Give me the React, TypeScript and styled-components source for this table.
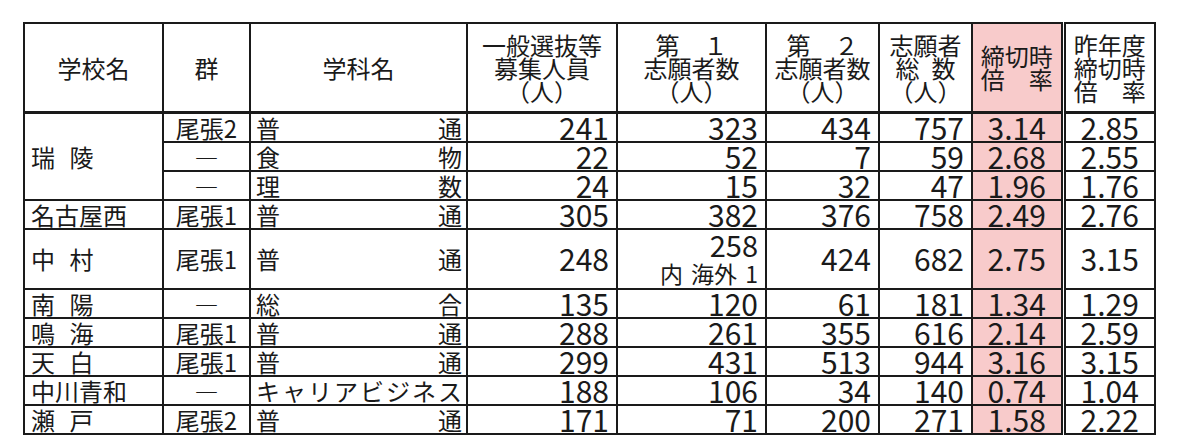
import React from "react";
import styled, { createGlobalStyle } from "styled-components";

const GlobalStyle = createGlobalStyle`
	body {
		margin: 0;
		background: #ffffff;
		color: #1a1a1a;
		font-family: "Noto Sans CJK JP", "Noto Sans", sans-serif;
	}
`;

const Page = styled.div`
	padding: 22px 0 0 23px;
`;

const Table = styled.table`
	border-collapse: collapse;
	table-layout: fixed;
	width: 1133px;
	border: 2px solid #1a1a1a;
`;

const HeadRow = styled.tr`
	height: 89px;
`;

const BodyRow = styled.tr<{ $tall?: boolean }>`
	height: ${(p) => (p.$tall ? "59px" : "29px")};
`;

const Cell = styled.td<{ $pink?: boolean; $double?: boolean }>`
	border: 2px solid #1a1a1a;
	padding: 0;
	vertical-align: middle;
	white-space: nowrap;
	background: ${(p) => (p.$pink ? "#f8cbcb" : "transparent")};
	border-left: ${(p) => (p.$double ? "5px double #1a1a1a" : "2px solid #1a1a1a")};
`;

const HeadCell = styled(Cell).attrs({ as: "th" })`
	border-bottom: 3px solid #1a1a1a;
	font-weight: normal;
	font-size: 24px;
	line-height: 23px;
	text-align: center;
`;

const Gap = styled.span<{ $w: number }>`
	display: inline-block;
	width: ${(p) => p.$w}px;
`;

const NameCell = styled(Cell)`
	font-size: 24px;
	line-height: 27px;
	padding-left: 6px;
	word-spacing: 9px;
`;

const GroupCell = styled(Cell)`
	font-size: 24px;
	line-height: 27px;
	text-align: center;
`;

const SubjectCell = styled(Cell)`
	font-size: 24px;
	line-height: 27px;
	padding: 0 4px 0 5px;
`;

const Spread = styled.div`
	display: flex;
	justify-content: space-between;
`;

const NumCell = styled(Cell)`
	font-size: 30px;
	line-height: 27px;
	text-align: right;
	padding-right: 7px;
`;

const RateCell = styled(Cell)`
	font-size: 30px;
	line-height: 27px;
	text-align: center;
`;

const StackLine = styled.div<{ $small?: boolean }>`
	font-size: ${(p) => (p.$small ? "23px" : "29px")};
	line-height: 29px;
	word-spacing: ${(p) => (p.$small ? "3px" : "0")};
`;

type Row = {
	school?: string;
	span?: number;
	group: string;
	subject: string;
	quota: number;
	first: number;
	firstNote?: string;
	second: number;
	total: number;
	rate: string;
	prev: string;
};

const rows: Row[] = [
	{ school: "瑞 陵", span: 3, group: "尾張2", subject: "普通", quota: 241, first: 323, second: 434, total: 757, rate: "3.14", prev: "2.85" },
	{ group: "―", subject: "食物", quota: 22, first: 52, second: 7, total: 59, rate: "2.68", prev: "2.55" },
	{ group: "―", subject: "理数", quota: 24, first: 15, second: 32, total: 47, rate: "1.96", prev: "1.76" },
	{ school: "名古屋西", group: "尾張1", subject: "普通", quota: 305, first: 382, second: 376, total: 758, rate: "2.49", prev: "2.76" },
	{ school: "中 村", group: "尾張1", subject: "普通", quota: 248, first: 258, firstNote: "内 海外 1", second: 424, total: 682, rate: "2.75", prev: "3.15" },
	{ school: "南 陽", group: "―", subject: "総合", quota: 135, first: 120, second: 61, total: 181, rate: "1.34", prev: "1.29" },
	{ school: "鳴 海", group: "尾張1", subject: "普通", quota: 288, first: 261, second: 355, total: 616, rate: "2.14", prev: "2.59" },
	{ school: "天 白", group: "尾張1", subject: "普通", quota: 299, first: 431, second: 513, total: 944, rate: "3.16", prev: "3.15" },
	{ school: "中川青和", group: "―", subject: "キャリアビジネス", quota: 188, first: 106, second: 34, total: 140, rate: "0.74", prev: "1.04" },
	{ school: "瀬 戸", group: "尾張2", subject: "普通", quota: 171, first: 71, second: 200, total: 271, rate: "1.58", prev: "2.22" },
];

const widths = [139, 87, 217, 150, 149, 113, 93, 91, 92];

function Subject({ text }: { text: string }) {
	return (
		<Spread>
			{Array.from(text).map((ch, i) => (
				<span key={i}>{ch}</span>
			))}
		</Spread>
	);
}

export default function App() {
	return (
		<Page>
			<GlobalStyle />
			<Table>
				<colgroup>
					{widths.map((w, i) => (
						<col key={i} style={{ width: w }} />
					))}
				</colgroup>
				<thead>
					<HeadRow>
						<HeadCell>学校名</HeadCell>
						<HeadCell>群</HeadCell>
						<HeadCell>学科名</HeadCell>
						<HeadCell>
							一般選抜等
							<br />
							募集人員
							<br />
							（人）
						</HeadCell>
						<HeadCell>
							第　１
							<br />
							志願者数
							<br />
							（人）
						</HeadCell>
						<HeadCell>
							第　２
							<br />
							志願者数
							<br />
							（人）
						</HeadCell>
						<HeadCell>
							志願者
							<br />
							総<Gap $w={12} />数
							<br />
							（人）
						</HeadCell>
						<HeadCell $pink>
							締切時
							<br />
							倍　率
						</HeadCell>
						<HeadCell $double>
							昨年度
							<br />
							締切時
							<br />
							倍　率
						</HeadCell>
					</HeadRow>
				</thead>
				<tbody>
					{rows.map((r, i) => (
						<BodyRow key={i} $tall={!!r.firstNote}>
							{r.school && <NameCell rowSpan={r.span ?? 1}>{r.school}</NameCell>}
							<GroupCell>{r.group}</GroupCell>
							<SubjectCell>
								<Subject text={r.subject} />
							</SubjectCell>
							<NumCell>{r.quota}</NumCell>
							{r.firstNote ? (
								<NumCell>
									<StackLine>{r.first}</StackLine>
									<StackLine $small>{r.firstNote}</StackLine>
								</NumCell>
							) : (
								<NumCell>{r.first}</NumCell>
							)}
							<NumCell>{r.second}</NumCell>
							<NumCell>{r.total}</NumCell>
							<RateCell $pink>{r.rate}</RateCell>
							<RateCell $double>{r.prev}</RateCell>
						</BodyRow>
					))}
				</tbody>
			</Table>
		</Page>
	);
}
